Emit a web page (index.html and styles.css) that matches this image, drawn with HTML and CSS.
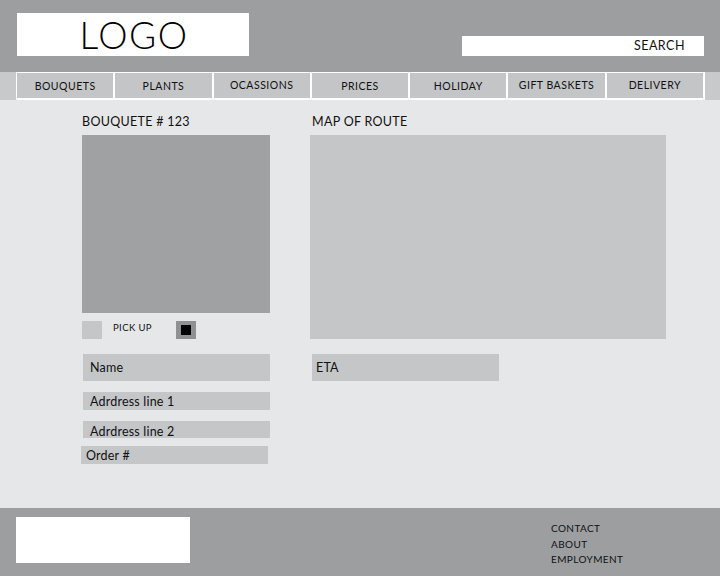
FILE: index.html
```html
<!DOCTYPE html>
<html>
<head>
<meta charset="utf-8">
<link rel="stylesheet" href="styles.css">
</head>
<body>
<header class="header">
  <div class="logo">LOGO</div>
  <div class="search">SEARCH</div>
</header>
<nav class="nav">
  <ul class="nav-list">
    <li class="nav-item">BOUQUETS</li>
    <li class="nav-item">PLANTS</li>
    <li class="nav-item nav-up">OCASSIONS</li>
    <li class="nav-item">PRICES</li>
    <li class="nav-item">HOLIDAY</li>
    <li class="nav-item nav-up">GIFT BASKETS</li>
    <li class="nav-item nav-up">DELIVERY</li>
  </ul>
</nav>
<main class="content">
  <section class="col-left">
    <h2 class="title">BOUQUETE # 123</h2>
    <div class="photo"></div>
    <div class="pickup">
      <span class="check"></span>
      <span class="pickup-label">PICK UP</span>
      <span class="check check-on"><span class="check-dot"></span></span>
    </div>
    <div class="field field-tall">Name</div>
    <div class="field field-a1">Adrdress line 1</div>
    <div class="field field-a2">Adrdress line 2</div>
    <div class="field field-order">Order #</div>
  </section>
  <section class="col-right">
    <h2 class="title">MAP OF ROUTE</h2>
    <div class="map"></div>
    <div class="field field-tall field-eta">ETA</div>
  </section>
</main>
<footer class="footer">
  <div class="footer-logo"></div>
  <ul class="footer-links">
    <li>CONTACT</li>
    <li>ABOUT</li>
    <li>EMPLOYMENT</li>
  </ul>
</footer>
</body>
</html>
```
FILE: styles.css
```css
* { box-sizing: border-box; }
html, body { margin: 0; padding: 0; }
body {
  width: 720px;
  height: 576px;
  overflow: hidden;
  font-family: "Lato", "Noto Sans", sans-serif;
  color: #111;
  background: #e6e7e8;
}
.header {
  height: 72px;
  background: #9d9ea0;
  display: flex;
  justify-content: space-between;
  padding: 13px 16px 0 17px;
}
.logo {
  width: 232px;
  height: 43px;
  background: #fff;
  display: flex;
  align-items: center;
  justify-content: center;
  font-size: 37px;
  font-weight: 300;
  letter-spacing: 1.5px;
  padding-left: 2px;
  color: #000;
}
.search {
  align-self: flex-start;
  margin-top: 23px;
  width: 242px;
  height: 20px;
  background: #fff;
  font-size: 12.5px;
  letter-spacing: 0.5px;
  text-align: right;
  padding: 2px 19px 0 0;
}
.nav {
  height: 28px;
  background: #c8c9cb;
  padding-left: 16px;
}
.nav-list {
  list-style: none;
  margin: 0;
  padding: 0;
  width: 689px;
  height: 28px;
  display: flex;
  border-top: 1px solid #fff;
  border-bottom: 2px solid #fff;
  border-left: 1px solid #fff;
}
.nav-item {
  flex: 1;
  background: #c4c5c7;
  border-right: 2px solid #fff;
  font-size: 10.5px;
  letter-spacing: 0.5px;
  display: flex;
  justify-content: center;
  align-items: center;
  padding-top: 1px;
}
.nav-up { padding-top: 0; padding-bottom: 2px; }
.content {
  height: 408px;
  display: flex;
  padding: 15px 0 0 82px;
  gap: 40px;
}
.title {
  margin: 0 0 6px;
  font-size: 12.5px;
  font-weight: 400;
  letter-spacing: 0.3px;
  line-height: 14px;
}
.col-left { width: 188px; display: flex; flex-direction: column; }
.col-right { width: 356px; display: flex; flex-direction: column; }
.col-right .title { margin-left: 2px; }
.photo {
  height: 178px;
  background: #a0a1a3;
}
.pickup {
  display: flex;
  align-items: flex-start;
  margin-top: 8px;
  height: 18px;
}
.check {
  width: 20px;
  height: 18px;
  background: #c5c6c8;
}
.pickup-label {
  font-size: 9.5px;
  letter-spacing: 0.4px;
  margin: 1px 0 0 11px;
  width: 63px;
}
.check-on {
  background: #8f9092;
  display: flex;
  align-items: center;
  justify-content: center;
}
.check-dot { width: 10px; height: 10px; background: #000; }
.field {
  background: #c5c6c8;
  font-size: 12.5px;
  letter-spacing: 0.2px;
  padding-left: 7px;
  display: flex;
  align-items: center;
  margin-left: 1px;
}
.field-tall { height: 27px; margin-top: 15px; }
.field-a1 { height: 18px; margin-top: 11px; }
.field-a2 { height: 17px; margin-top: 11px; padding-top: 4px; }
.field-order { width: 187px; height: 18px; margin-top: 8px; margin-left: -1px; padding-left: 5px; }
.map {
  height: 204px;
  background: #c5c6c8;
}
.field-eta {
  width: 187px;
  margin-top: 15px;
  margin-left: 2px;
  padding-left: 4px;
}
.footer {
  height: 68px;
  background: #9d9ea0;
  display: flex;
  justify-content: space-between;
  padding: 9px 0 0 16px;
}
.footer-logo {
  width: 174px;
  height: 46px;
  background: #fff;
}
.footer-links {
  list-style: none;
  margin: 0;
  padding: 0;
  width: 169px;
  font-size: 10px;
  letter-spacing: 0.4px;
  line-height: 15.5px;
  padding-top: 4px;
}
```
